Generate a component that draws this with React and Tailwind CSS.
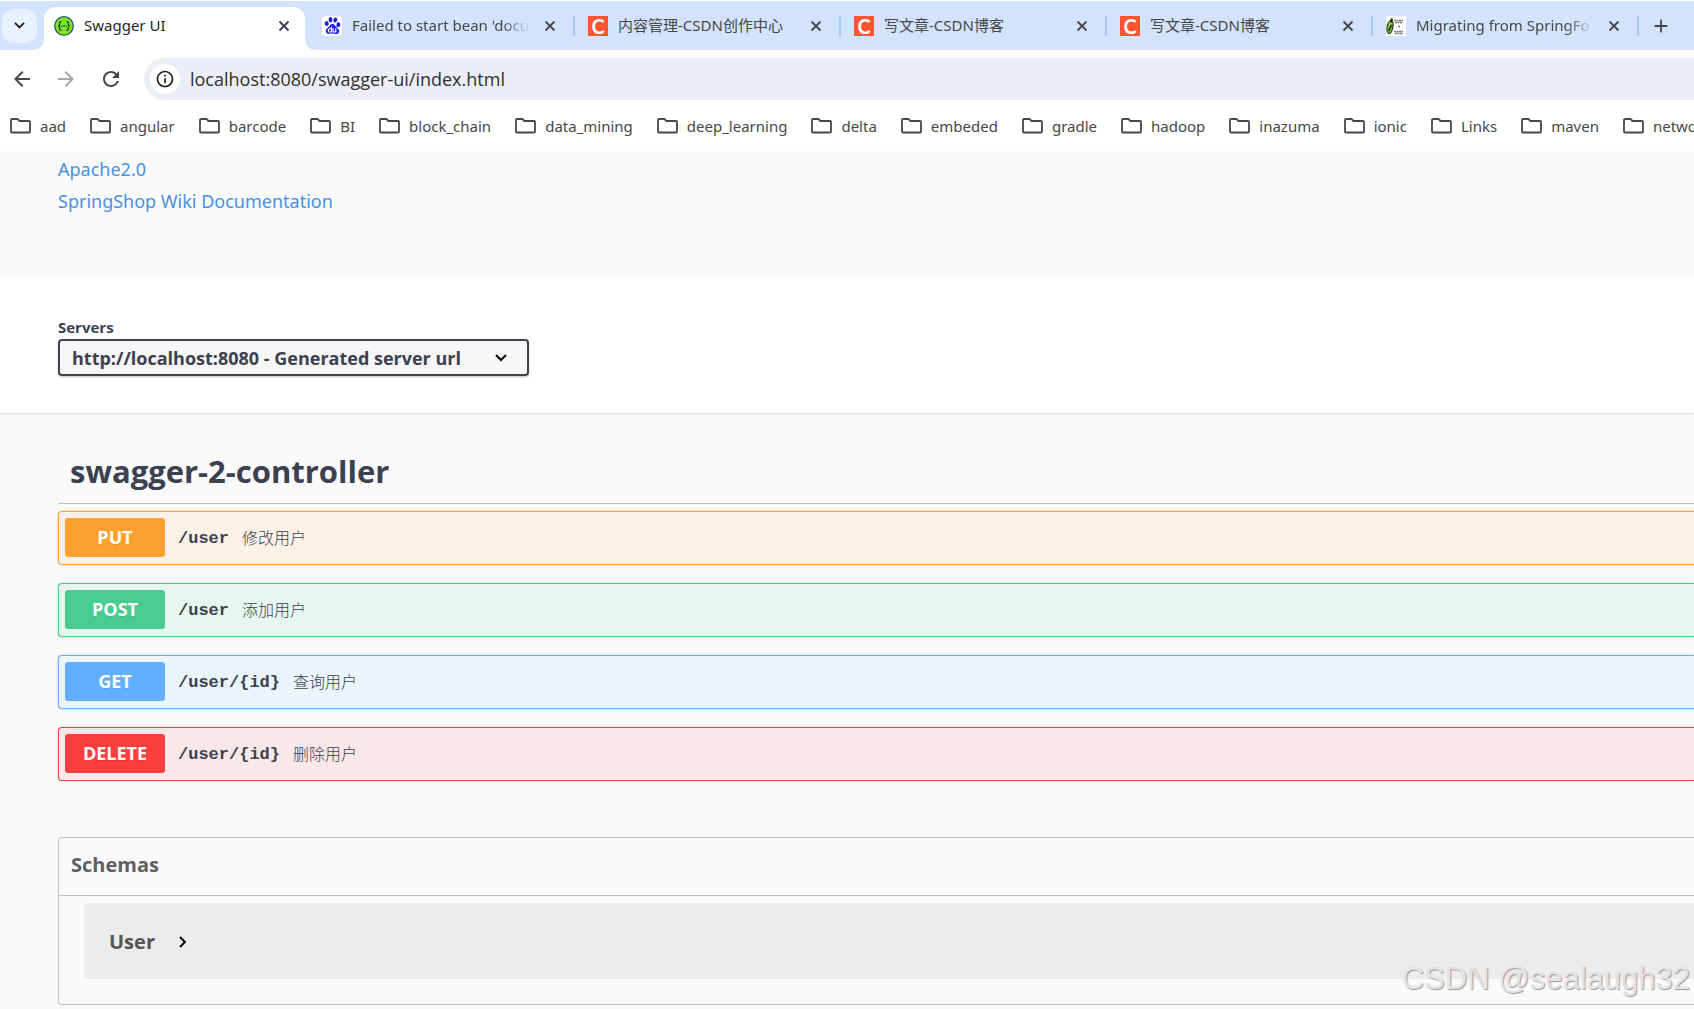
import { useState } from "react";
import { MdAdd, MdArrowBack, MdArrowForward, MdInfoOutline, MdRefresh } from "react-icons/md";
import { SiBaidu } from "react-icons/si";

const tabs = [
  { title: "Failed to start bean 'docu", icon: "baidu", long: true },
  { title: "内容管理-CSDN创作中心", icon: "csdn" },
  { title: "写文章-CSDN博客", icon: "csdn" },
  { title: "写文章-CSDN博客", icon: "csdn" },
  { title: "Migrating from SpringFo", icon: "spring", long: true },
];

const bookmarks = [
  "aad", "angular", "barcode", "BI", "block_chain", "data_mining", "deep_learning", "delta",
  "embeded", "gradle", "hadoop", "inazuma", "ionic", "Links", "maven", "netwo",
];

const operations = [
  { method: "PUT", path: "/user", summary: "修改用户", box: "border-[#fca130] bg-[#fbf1e6]", badge: "bg-[#fca130]" },
  { method: "POST", path: "/user", summary: "添加用户", box: "border-[#49cc90] bg-[#e8f6f0]", badge: "bg-[#49cc90]" },
  { method: "GET", path: "/user/{id}", summary: "查询用户", box: "border-[#61affe] bg-[#ebf3fb]", badge: "bg-[#61affe]" },
  { method: "DELETE", path: "/user/{id}", summary: "删除用户", box: "border-[#f93e3e] bg-[#fae7e7]", badge: "bg-[#f93e3e]" },
];

function Chevron({ className }) {
  return (
    <svg viewBox="0 0 12 8" className={className} fill="none" stroke="currentColor" strokeWidth="2">
      <path d="M1 1l5 5 5-5" />
    </svg>
  );
}

function SwaggerIcon() {
  return (
    <svg viewBox="0 0 20 20" className="size-5 shrink-0">
      <circle cx="10" cy="10" r="9.3" fill="#7be81f" stroke="#2f5b65" strokeWidth="1.3" />
      <g fill="none" stroke="#173647" strokeWidth="1.2">
        <path d="M7.5 5.5H7q-1.3 0-1.3 1.4v1.4Q5.7 10 4 10q1.7 0 1.7 1.7v1.4q0 1.4 1.3 1.4h.5" />
        <path d="M12.5 5.5h.5q1.3 0 1.3 1.4v1.4Q14.3 10 16 10q-1.7 0-1.7 1.7v1.4q0 1.4-1.3 1.4h-.5" />
      </g>
      <g fill="#173647">
        <circle cx="7.8" cy="10" r=".8" />
        <circle cx="10" cy="10" r=".8" />
        <circle cx="12.2" cy="10" r=".8" />
      </g>
    </svg>
  );
}

function SpringIcon() {
  return (
    <svg viewBox="0 0 20 20" className="size-5 shrink-0">
      <rect width="20" height="20" fill="#fff" />
      <ellipse cx="4" cy="11" rx="2.8" ry="6.5" transform="rotate(10 4 11)" fill="#8bdc2c" stroke="#2d4a1c" strokeWidth="1.4" />
      <path d="M5 2l2 1-1 4-2-1zM5 8l1 2-3 6-1-2z" fill="#1d2b17" />
      <path d="M8 4.500h9M9 6.500h7M12 10.500h2M8 15.500h9M9 17.500h8" stroke="#777" strokeWidth="1.3" strokeDasharray="2 .5" />
    </svg>
  );
}

function TabIcon({ type }) {
  if (type === "baidu") {
    return (
      <span className="flex size-5 shrink-0 items-center justify-center rounded-sm bg-white">
        <SiBaidu className="size-[17px] text-[#2020e0]" />
      </span>
    );
  }
  if (type === "csdn") {
    return (
      <span className="flex size-5 shrink-0 items-center justify-center bg-[#fc5531] font-[Lato] text-xl leading-5 font-bold text-white">
        C
      </span>
    );
  }
  return <SpringIcon />;
}

function FolderIcon() {
  return (
    <svg viewBox="0 0 21 16" className="h-4 w-[21px] shrink-0" fill="none" stroke="#474747" strokeWidth="1.8">
      <path d="M1 13.500V2q0-1 1-1h5.500l2 2H19q1 0 1 1v9.500q0 1-1 1H2q-1 0-1-1z" />
    </svg>
  );
}

function CloseButton() {
  return (
    <button aria-label="Close tab" className="flex size-5 items-center justify-center">
      <svg viewBox="0 0 12 12" className="size-3" stroke="currentColor" strokeWidth="1.9">
        <path d="M1.500 1.500l9 9M10.500 1.500l-9 9" />
      </svg>
    </button>
  );
}

function TabStrip() {
  return (
    <div className="flex h-[50px] items-center overflow-hidden border-t border-white bg-[#d3e3fd] pl-[2px]">
      <button aria-label="Search tabs" className="flex h-[34px] w-[35px] shrink-0 items-center justify-center rounded-xl bg-[#e9f1fe]">
        <Chevron className="w-[11px] text-[#1f1f1f]" />
      </button>
      <div className="relative ml-[7px] mr-1 flex h-[43px] w-[261px] shrink-0 items-center gap-[10px] self-end rounded-t-xl bg-white pb-[6px] pl-[10px] pr-[11px]">
        <svg viewBox="0 0 12 12" className="absolute bottom-0 -left-3 size-3" fill="#fff"><path d="M12 0v12H0Q12 12 12 0z" /></svg>
        <svg viewBox="0 0 12 12" className="absolute bottom-0 -right-3 size-3" fill="#fff"><path d="M0 0v12h12Q0 12 0 0z" /></svg>
        <SwaggerIcon />
        <span className="flex-1 text-[15px] text-[#1f1f1f]">Swagger UI</span>
        <CloseButton />
      </div>
      {tabs.map((tab, i) => (
        <div key={i} className="flex h-5 w-[266px] shrink-0 items-center gap-[10px] border-r-2 border-[#a8c7fa] pl-[13px] pr-[13px] text-[#474747]">
          <TabIcon type={tab.icon} />
          <span className={`min-w-0 flex-1 overflow-hidden text-[15px] whitespace-nowrap ${tab.long ? "[mask-image:linear-gradient(to_right,black_84%,transparent)]" : ""}`}>
            {tab.title}
          </span>
          <CloseButton />
        </div>
      ))}
      <button aria-label="New tab" className="ml-[10px] flex size-6 shrink-0 items-center justify-center text-[#474747]">
        <MdAdd className="size-[22px]" />
      </button>
    </div>
  );
}

function Toolbar() {
  return (
    <div className="flex h-[58px] items-center bg-white pl-[10px] text-[#474747]">
      <button aria-label="Back" className="mr-5"><MdArrowBack className="size-6" /></button>
      <button aria-label="Forward" className="mr-[21px] text-[#a8a8a8]"><MdArrowForward className="size-6" /></button>
      <button aria-label="Reload" className="mr-[21px]"><MdRefresh className="size-6" /></button>
      <div className="flex h-[42px] flex-1 items-center gap-[10px] rounded-l-full bg-[#ebeef7] pl-[6px]">
        <button aria-label="Site information" className="flex size-[30px] items-center justify-center rounded-full bg-white">
          <MdInfoOutline className="size-5 text-[#1f1f1f]" />
        </button>
        <input
          aria-label="Address"
          className="min-w-0 flex-1 bg-transparent font-['Open_Sans',sans-serif] text-lg text-[#303030] outline-none"
          defaultValue="localhost:8080/swagger-ui/index.html"
        />
      </div>
    </div>
  );
}

function Bookmarks() {
  return (
    <nav className="flex h-[43px] items-center gap-6 overflow-hidden bg-white pb-[7px] pl-[10px]">
      {bookmarks.map((name) => (
        <a key={name} href="#" className="flex shrink-0 items-center gap-[9px] text-[15px] text-[#474747]">
          <FolderIcon />
          {name}
        </a>
      ))}
    </nav>
  );
}

function Operation({ op }) {
  return (
    <button className={`flex h-[54px] w-full items-center rounded-l border border-r-0 pb-px pl-[6px] text-left shadow-[0_0_3px_rgba(0,0,0,0.19)] ${op.box}`}>
      <span className={`w-[100px] rounded-[3px] text-center font-['Open_Sans',sans-serif] text-lg leading-[39px] font-bold text-white [text-shadow:0_1px_0_rgba(0,0,0,0.1)] ${op.badge}`}>
        {op.method}
      </span>
      <span className="ml-[13px] pt-[3px] font-['Liberation_Mono',monospace] text-[17px] font-bold">{op.path}</span>
      <span className="ml-[13px] pt-px text-base font-light">{op.summary}</span>
    </button>
  );
}

export default function App() {
  const [open, setOpen] = useState(false);

  return (
    <div className="relative min-h-screen overflow-hidden bg-[#fafafa] font-['Noto_Sans','Noto_Sans_CJK_SC',sans-serif] text-[#3b4151]">
      <TabStrip />
      <Toolbar />
      <Bookmarks />

      <section className="flex h-[125px] flex-col items-start gap-1 pt-1 pl-[58px] text-lg text-[#4990e2]">
        <a href="#">Apache2.0</a>
        <a href="#">SpringShop Wiki Documentation</a>
      </section>

      <div className="font-['Open_Sans','Noto_Sans_CJK_SC',sans-serif]">
        <section className="bg-white pt-[41px] pb-[37px] pl-[58px] shadow-[0_1px_2px_rgba(0,0,0,0.15)]">
          <label htmlFor="servers" className="block pb-[2px] text-[15px] leading-5 font-bold">Servers</label>
          <div className="relative w-[471px]">
            <select id="servers" className="h-[37px] w-full appearance-none rounded border-2 border-[#41444e] bg-[#f7f7f7] pl-3 text-lg font-bold shadow-[0_1px_2px_rgba(0,0,0,0.25)]">
              <option>http://localhost:8080 - Generated server url</option>
            </select>
            <Chevron className="pointer-events-none absolute top-[15px] right-[22px] w-3 text-black" />
          </div>
        </section>

        <main className="pl-[58px]">
          <h3 className="mt-[35px] border-b border-[#3b4151]/30 pb-[9px] pl-3 text-[31px] leading-[46px] font-bold">
            swagger-2-controller
          </h3>
          <div className="mt-[7px] flex flex-col gap-[18px]">
            {operations.map((op) => (
              <Operation key={op.method} op={op} />
            ))}
          </div>

          <section className="mt-14 rounded-l border border-r-0 border-[#3b4151]/30 pb-[25px]">
            <h4 className="border-b border-[#3b4151]/30 pb-1 pl-3 text-xl leading-[53px] font-bold text-[#606060]">Schemas</h4>
            <div className="mt-[7px] ml-[25px] rounded-l bg-[#ececec]">
              <button onClick={() => setOpen(!open)} className="flex h-[76px] items-center gap-[22px] pt-[2px] pl-[25px] text-xl font-bold text-[#555555]">
                User
                <Chevron className={`w-3 text-black ${open ? "" : "-rotate-90"}`} />
              </button>
            </div>
          </section>
        </main>
      </div>

      <div className="absolute right-1 bottom-2 font-['Liberation_Sans',sans-serif] text-[31px] leading-[44px] text-[#e4e4e4] [text-shadow:1px_1px_1px_#999]">
        CSDN @sealaugh32
      </div>
    </div>
  );
}
